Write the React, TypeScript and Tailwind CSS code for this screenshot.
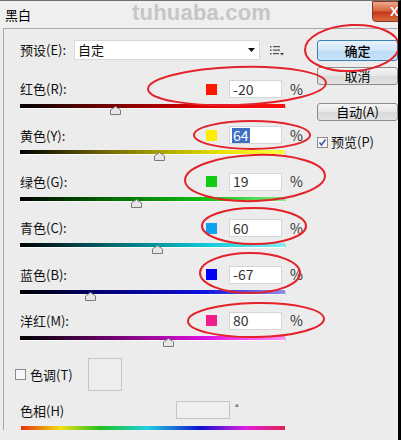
import React from 'react';

const rows = [
  { label: '红色(R):', value: '-20', v: -20, sw: 'bg-[#ff1800]', grad: 'bg-[linear-gradient(to_right,#000_0%,#5a0000_25%,#e00000_70%,#ff1010_100%)]' },
  { label: '黄色(Y):', value: '64', v: 64, sw: 'bg-[#ffec00]', grad: 'bg-[linear-gradient(to_right,#000,#6a6000_30%,#e8e000_75%,#ffff40)]', selected: true },
  { label: '绿色(G):', value: '19', v: 19, sw: 'bg-[#12cc12]', grad: 'bg-[linear-gradient(to_right,#000,#006000_30%,#10c010_70%,#80e880)]' },
  { label: '青色(C):', value: '60', v: 60, sw: 'bg-[#0ea2f0]', grad: 'bg-[linear-gradient(to_right,#000,#005a60_30%,#10c8d8_70%,#80f0f8)]' },
  { label: '蓝色(B):', value: '-67', v: -67, sw: 'bg-[#0000f8]', grad: 'bg-[linear-gradient(to_right,#000,#000070_30%,#1010e0_70%,#9090f0)]' },
  { label: '洋红(M):', value: '80', v: 80, sw: 'bg-[#f01e8a]', grad: 'bg-[linear-gradient(to_right,#000,#600060_30%,#e010e0_70%,#ff90ff)]' },
];

function Thumb({ left }: { left: number }) {
  return (
    <svg className="absolute top-[2px]" style={{ left }} width="11" height="9" viewBox="0 0 11 9">
      <polygon points="5.5,0.5 10.5,4 10.5,8.5 0.5,8.5 0.5,4" fill="#e6e6e6" stroke="#7a7a7a" strokeWidth="1" />
    </svg>
  );
}

function CheckBox({ checked }: { checked?: boolean }) {
  return (
    <svg width="11" height="11" viewBox="0 0 11 11">
      <rect x="0.5" y="0.5" width="10" height="10" fill="#f6f6f6" stroke="#8a8a8a" />
      {checked && <path d="M2.5 5.5 L4.5 8 L8.5 2.5" fill="none" stroke="#3b5e9e" strokeWidth="1.6" />}
    </svg>
  );
}

export default function App() {
  return (
    <div className="relative w-[401px] h-[440px] overflow-hidden bg-[#ececec] border-r-[3px] border-t border-r-black border-t-[#707070] font-['Noto_Sans_CJK_SC','Noto_Sans',sans-serif] text-[13px] text-[#111]">
      {/* title bar */}
      <div className="h-[27px] flex items-center pl-[5px] bg-[#efefef]">
        <span className="text-[13px] text-black">黑白</span>
      </div>
      {/* watermark */}
      <div className="absolute left-[132px] top-[0px] font-['Liberation_Sans',sans-serif] font-bold text-[22px] leading-[24px] text-[#c6c6c6] tracking-[0.2px]">
        tuhuaba.com
      </div>
      {/* close button */}
      <div className="absolute top-0 left-[372px] w-[44px] h-[21px] rounded-bl-[4px] border border-[#8a3520] bg-[linear-gradient(to_bottom,#ecaa90,#d8663f_45%,#c43a18_55%,#d86a40)] flex items-center pl-[17px]">
        <span className="text-white font-bold text-[13px] font-['Liberation_Sans',sans-serif]">X</span>
      </div>

      {/* body */}
      <div className="ml-[3px] border-l border-t border-[#a8a8a8] flex pt-[11px]">
        {/* left column */}
        <div className="pl-[16px] w-[299px] flex flex-col">
          <div className="h-[20px] flex items-center">
            <span className="w-[54px]">预设(E):</span>
            <div className="w-[186px] h-[20px] bg-white border border-[#d8d8d8] flex items-center justify-between pl-[3px] pr-[4px]">
              <span>自定</span>
              <svg width="7" height="4" viewBox="0 0 7 4"><polygon points="0,0 7,0 3.5,4" fill="#111" /></svg>
            </div>
            <svg className="ml-[10px]" width="15" height="11" viewBox="0 0 15 11">
              <rect x="0" y="1" width="1.5" height="1.5" fill="#555" />
              <rect x="3" y="1" width="7" height="1.2" fill="#555" />
              <rect x="0" y="4.5" width="1.5" height="1.5" fill="#555" />
              <rect x="3" y="4.5" width="7" height="1.2" fill="#555" />
              <rect x="0" y="8" width="1.5" height="1.5" fill="#555" />
              <rect x="3" y="8" width="6" height="1.2" fill="#555" />
              <polygon points="10,8 14,8 12,10.5" fill="#444" />
            </svg>
          </div>

          <div className="mt-[20px] flex flex-col">
            {rows.map((r) => (
              <div key={r.label} className="h-[46.4px] flex flex-col">
                <div className="h-[18px] flex items-center w-[283px]">
                  <span className="flex-1">{r.label}</span>
                  <div className={`w-[11px] h-[11px] ${r.sw}`} />
                  <div className="ml-[12px] w-[53px] h-[18px] bg-white border border-[#d6d6d6] flex items-center pl-[2px] text-[14px] text-[#333]">
                    {r.selected ? (
                      <span className="bg-[#3a6fc4] text-white px-[1px] leading-[15px]">{r.value}</span>
                    ) : (
                      <span className="pl-[1px]">{r.value}</span>
                    )}
                  </div>
                  <span className="ml-[8px] text-[14px] text-[#333]">%</span>
                </div>
                <div className="relative mt-[6px] w-[265px] h-[4px]">
                  <div className={`h-full w-full ${r.grad} shadow-[0_1px_0_#fbfbfb,1px_1px_0_#d0d0d0]`} />
                  <Thumb left={((r.v + 200) / 500) * 265 - 5.5} />
                </div>
              </div>
            ))}
          </div>

          {/* tint row */}
          <div className="h-[33px] flex items-center -ml-[5px]">
            <CheckBox />
            <span className="ml-[4px] w-[58px]">色调(T)</span>
            <div className="w-[34px] h-[33px] border border-[#c4c4c4] bg-[#ededed]" />
          </div>

          {/* hue row */}
          <div className="mt-[10px] h-[18px] flex items-center">
            <span className="w-[156px]">色相(H)</span>
            <div className="w-[54px] h-[18px] border border-[#c4c4c4] bg-[#efefef]" />
            <span className="ml-[5px] text-[10px] self-start leading-[10px] mt-[2px]">°</span>
          </div>
          <div className="mt-[7px] w-[264px] ml-[1px] h-[4px] bg-[linear-gradient(to_right,#e83010,#f0e010_15%,#20c020_30%,#20d0e0_48%,#1010d0_68%,#e020e0_85%,#e02050)]" />
        </div>

        {/* right column */}
        <div className="ml-[14px] w-[81px] flex flex-col">
          <button className="h-[21px] w-full rounded-[3px] border border-[#3c7fb1] bg-[linear-gradient(to_bottom,#e8f3fc,#cfe6f9_50%,#bcdcf6_51%,#c8e3f8)] text-[13px] font-medium text-black">
            确定
          </button>
          <button className="mt-[6px] h-[18px] w-full rounded-[3px] border border-[#8a8a8a] bg-[linear-gradient(to_bottom,#f4f4f4,#e6e6e6_50%,#dadada_51%,#e2e2e2)] text-[13px] leading-[16px] text-black">
            取消
          </button>
          <button className="mt-[18px] h-[18px] w-full rounded-[3px] border border-[#8a8a8a] bg-[linear-gradient(to_bottom,#f4f4f4,#e6e6e6_50%,#dadada_51%,#e2e2e2)] text-[13px] leading-[16px] text-black">
            自动(A)
          </button>
          <div className="mt-[14px] h-[14px] flex items-center">
            <CheckBox checked />
            <span className="ml-[3px]">预览(P)</span>
          </div>
        </div>
      </div>

      {/* red annotation ellipses */}
      <svg className="absolute inset-0 pointer-events-none" width="401" height="440" viewBox="0 0 401 440">
        <g fill="none" stroke="#e4222a" strokeWidth="2">
          <ellipse cx="352" cy="47" rx="47" ry="23" transform="rotate(-3 352 47)" />
          <ellipse cx="237" cy="85" rx="89" ry="19" transform="rotate(-2 237 85)" />
          <ellipse cx="252" cy="134" rx="58" ry="14" />
          <ellipse cx="255" cy="177" rx="70" ry="23" transform="rotate(-2 255 177)" />
          <ellipse cx="254" cy="225" rx="52" ry="18" />
          <ellipse cx="250" cy="272" rx="50" ry="20" />
          <ellipse cx="256" cy="319" rx="68" ry="17" transform="rotate(-1 256 319)" />
        </g>
      </svg>
    </div>
  );
}
